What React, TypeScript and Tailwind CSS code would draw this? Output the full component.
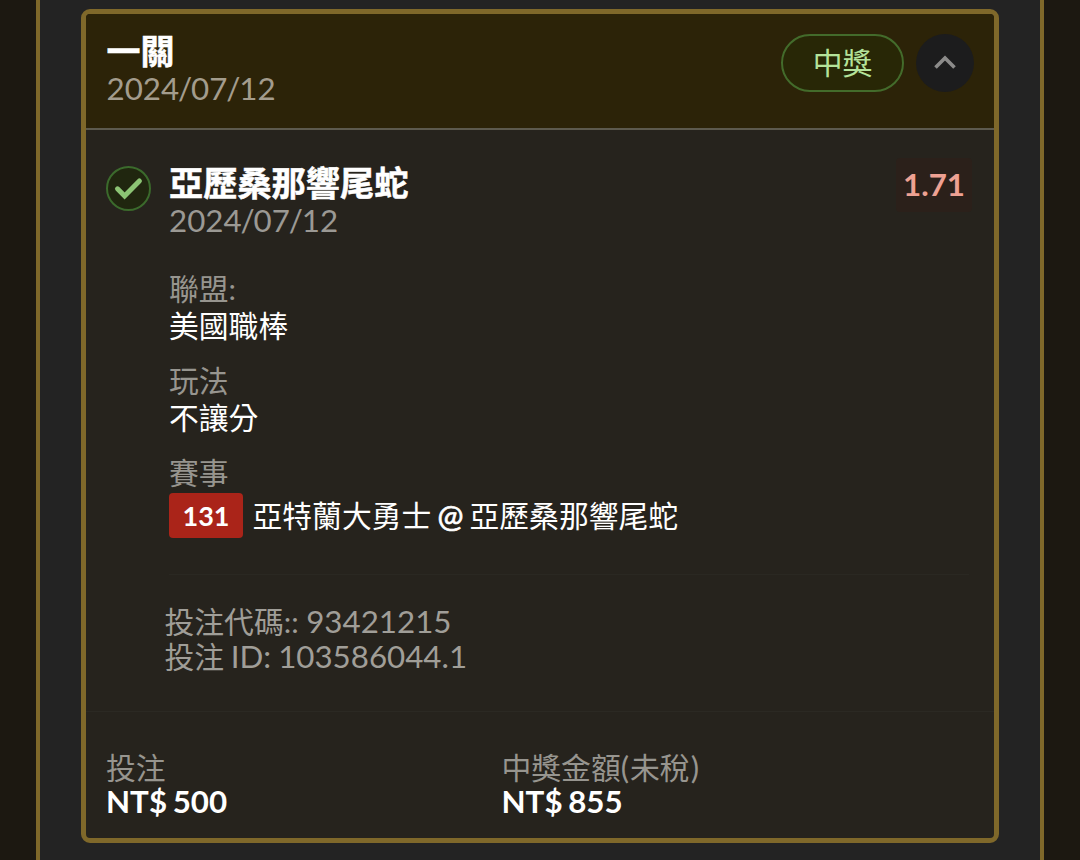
import type { ReactNode } from "react";

type Detail = {
  label: string;
  value: string;
};

const details: Detail[] = [
  { label: "聯盟:", value: "美國職棒" },
  { label: "玩法", value: "不讓分" },
];

const CheckBadge = () => (
  <svg className="mt-[36px] size-[45px] shrink-0" viewBox="0 0 45 45" fill="none">
    <circle cx="22.5" cy="22.5" r="21.5" fill="#20260f" stroke="#3b6a2c" strokeWidth="2" />
    <path d="M11.5 22.8 L18.6 30 L33.4 15" stroke="#8cc474" strokeWidth="5" strokeLinecap="round" />
  </svg>
);

const ChevronUp = () => (
  <svg className="mb-[3px] h-[16px] w-[24px]" viewBox="0 0 24 16" fill="none">
    <path d="M2.5 13.5 L12 4 L21.5 13.5" stroke="#8c8b8a" strokeWidth="3.6" />
  </svg>
);

// slashes sit a little tighter than the digits
const DateText = ({ value }: { value: string }) => (
  <>
    {value.split("/").map((part, i) => (
      <span key={i}>
        {i > 0 && <span className="-mx-[1.1px]">/</span>}
        {part}
      </span>
    ))}
  </>
);

const Amount = ({ label, children }: { label: ReactNode; children: ReactNode }) => (
  <div className="w-[395.5px]">
    <p className="h-[33px] text-[29.8px] leading-[33px] text-[#97958f]">{label}</p>
    <p className="h-[34px] text-[31.3px] leading-[34px] font-bold text-white [word-spacing:-2px]">{children}</p>
  </div>
);

export default function App() {
  return (
    <div className="flex h-[860px] w-[1080px] justify-center overflow-hidden bg-[#1c1811] font-['Lato','Noto_Sans_CJK_TC',sans-serif] whitespace-nowrap">
      <main className="w-[1008px] border-x-4 border-[#7f682a] bg-[#232323] px-[41px] pt-[9px]">
        <article className="flex h-[834px] w-[918px] flex-col overflow-hidden rounded-[9px] border-5 border-[#7f682a] bg-[#26231d]">
          <header className="flex h-[116px] shrink-0 justify-between border-b-2 border-[#5d5a4e] bg-[#2c2308] pr-[20px] pl-[20.5px]">
            <div className="pt-[18px]">
              <h1 className="h-[37px] text-[34px] leading-[38px] font-bold text-white [-webkit-text-stroke:0.5px_white]">一關</h1>
              <p className="h-[38px] text-[31.3px] leading-[38px] text-[#a39c8d]">
                <DateText value="2024/07/12" />
              </p>
            </div>
            <div className="flex gap-3 pt-[20px]">
              <span className="flex h-[58px] w-[123px] items-center justify-center rounded-full border-2 border-[#436b2b] bg-[#282706] text-[29.8px] leading-none text-[#b4e39a]">
                中獎
              </span>
              <button className="flex size-[58px] items-center justify-center rounded-full bg-[#1c1c1d]">
                <ChevronUp />
              </button>
            </div>
          </header>

          <section className="flex h-[582px] shrink-0 border-b border-[#2b2923] pr-[25px] pl-[20px]">
            <CheckBadge />
            <div className="ml-[18px] flex flex-1 flex-col pt-[34px]">
              <div className="flex h-[106px] justify-between">
                <div>
                  <h2 className="h-[37px] text-[34.2px] leading-[38px] font-bold text-white [-webkit-text-stroke:0.5px_white]">亞歷桑那響尾蛇</h2>
                  <p className="h-[38px] text-[31.3px] leading-[38px] text-[#9b9994]">
                    <DateText value="2024/07/12" />
                  </p>
                </div>
                <span className="-mt-[6px] -mr-[3px] flex h-[54px] w-[76px] items-center justify-center rounded bg-[#2b201a] text-[31.3px] leading-none font-bold text-[#eea193]">
                  1.71
                </span>
              </div>

              {details.map(({ label, value }) => (
                <div key={label} className="h-[92px] text-[29.8px] leading-[37px]">
                  <p className="h-[37px] text-[#97958f]">{label}</p>
                  <p className="h-[37px] text-white">{value}</p>
                </div>
              ))}

              <div className="h-[121px] border-b border-[#2a2822] text-[29.8px]">
                <p className="h-[38.5px] leading-[37px] text-[#97958f]">賽事</p>
                <div className="flex h-[45px] items-center">
                  <span className="flex h-[45px] w-[74px] items-center justify-center rounded bg-[#aa2419] text-[27px] leading-none font-bold text-white">
                    131
                  </span>
                  <span className="ml-[9.5px] leading-[45px] text-white [word-spacing:-1.5px]">
                    亞特蘭大勇士 <span className="text-[31px] [-webkit-text-stroke:0.7px_white]">@</span> 亞歷桑那響尾蛇
                  </span>
                </div>
              </div>

              <div className="-ml-[4.5px] pt-[28.5px] text-[29.8px] leading-[34px] text-[#a09e98]">
                <p>投注代碼:: <span className="text-[31.3px]">93421215</span></p>
                <p className="[word-spacing:-1px]">投注 <span className="text-[31.3px]">ID: 103586044.1</span></p>
              </div>
            </div>
          </section>

          <footer className="flex pt-[39px] pl-[20px]">
            <Amount label="投注">NT$ 500</Amount>
            <Amount
              label={
                <>
                  中獎金額<span className="mr-[1px] text-[31.3px]">(</span>未稅<span className="ml-[1px] text-[31.3px]">)</span>
                </>
              }
            >
              NT$ 855
            </Amount>
          </footer>
        </article>
      </main>
    </div>
  );
}
